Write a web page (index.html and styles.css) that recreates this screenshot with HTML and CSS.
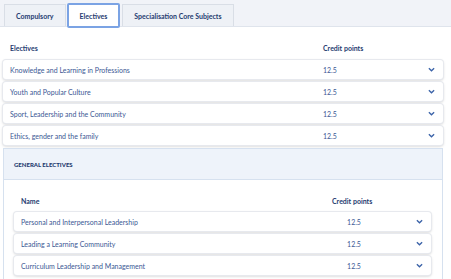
FILE: index.html
```html
<!DOCTYPE html>
<html>
<head>
<meta charset="utf-8">
<link rel="stylesheet" href="styles.css">
</head>
<body>
<div class="tabbar">
  <div class="tab">Compulsory</div>
  <div class="tab active">Electives</div>
  <div class="tab">Specialisation Core Subjects</div>
</div>
<div class="content">
  <div class="thead">
    <span class="c-name">Electives</span>
    <span class="c-credit">Credit points</span>
  </div>
  <div class="row"><span class="c-name">Knowledge and Learning in Professions</span><span class="c-credit">12.5</span><svg class="chev" viewBox="0 0 8 5"><path d="M1 1l3 3 3-3" /></svg></div>
  <div class="row"><span class="c-name">Youth and Popular Culture</span><span class="c-credit">12.5</span><svg class="chev" viewBox="0 0 8 5"><path d="M1 1l3 3 3-3" /></svg></div>
  <div class="row"><span class="c-name">Sport, Leadership and the Community</span><span class="c-credit">12.5</span><svg class="chev" viewBox="0 0 8 5"><path d="M1 1l3 3 3-3" /></svg></div>
  <div class="row"><span class="c-name">Ethics, gender and the family</span><span class="c-credit">12.5</span><svg class="chev" viewBox="0 0 8 5"><path d="M1 1l3 3 3-3" /></svg></div>
  <div class="panel">
    <div class="panel-head">GENERAL ELECTIVES</div>
    <div class="panel-body">
      <div class="thead inner">
        <span class="c-name">Name</span>
        <span class="c-credit">Credit points</span>
      </div>
      <div class="row inner"><span class="c-name">Personal and Interpersonal Leadership</span><span class="c-credit">12.5</span><svg class="chev" viewBox="0 0 8 5"><path d="M1 1l3 3 3-3" /></svg></div>
      <div class="row inner"><span class="c-name">Leading a Learning Community</span><span class="c-credit">12.5</span><svg class="chev" viewBox="0 0 8 5"><path d="M1 1l3 3 3-3" /></svg></div>
      <div class="row inner"><span class="c-name">Curriculum Leadership and Management</span><span class="c-credit">12.5</span><svg class="chev" viewBox="0 0 8 5"><path d="M1 1l3 3 3-3" /></svg></div>
    </div>
  </div>
</div>
</body>
</html>
```

FILE: styles.css
```css
html, body {
  margin: 0;
  padding: 0;
  background: #ffffff;
  font-family: Lato, "Open Sans", sans-serif;
  font-size: 7px;
  color: #3b5894;
}

.tabbar {
  display: flex;
  align-items: flex-end;
  height: 27px;
  padding-left: 4px;
  background: #f1f3f8;
  border-bottom: 1px solid #dfe4ec;
  box-sizing: border-box;
}

.tab {
  height: 22px;
  display: flex;
  align-items: center;
  justify-content: center;
  padding: 0 11px;
  background: #eef1f6;
  border: 1px solid #d9dee6;
  border-bottom: none;
  box-sizing: border-box;
  font-weight: 700;
  font-size: 7px;
  color: #1f3b70;
}

.tab.active {
  height: 25px;
  margin-bottom: -2px;
  margin-left: 1px;
  margin-right: 2px;
  background: #ffffff;
  border: 2px solid #7ba3e4;
  border-radius: 2px;
  padding: 0 11px;
  position: relative;
}

.content {
  padding: 0 8px 0 3px;
}

.thead {
  display: flex;
  align-items: center;
  height: 33px;
  padding: 8px 7px 0;
  box-sizing: border-box;
  font-weight: 700;
  color: #1f3b70;
}

.c-name {
  width: 313px;
  flex: none;
}

.c-credit {
  flex: 1;
}

.row {
  display: flex;
  align-items: center;
  height: 19px;
  margin-bottom: 3px;
  padding: 0 8px 0 7px;
  background: #fff;
  border-radius: 3px;
  box-shadow: 0 0 0 1px #e7e9ee, 0 1px 3px rgba(0, 0, 0, 0.25);
}

.chev {
  width: 7px;
  height: 5px;
  fill: none;
  stroke: #3a62a8;
  stroke-width: 1.5;
}

.panel {
  margin-top: 3px;
  border: 1px solid #d6e1ef;
  border-bottom: none;
}

.panel-head {
  height: 30px;
  display: flex;
  align-items: center;
  padding-left: 10px;
  background: #eef3fa;
  border-bottom: 1px solid #d6e1ef;
  font-size: 6px;
  font-weight: 900;
  color: #1f3b70;
}

.panel-body {
  padding: 0 11px 4px 10px;
}

.thead.inner {
  height: 32px;
  padding-top: 10px;
}

.thead.inner .c-name,
.row.inner .c-name {
  width: 311px;
}

.thead.inner .c-credit {
  flex: none;
  width: 80px;
}

.row.inner .c-credit {
  flex: none;
  width: 44px;
  text-align: center;
}

.row.inner .chev {
  margin-left: auto;
}
```
